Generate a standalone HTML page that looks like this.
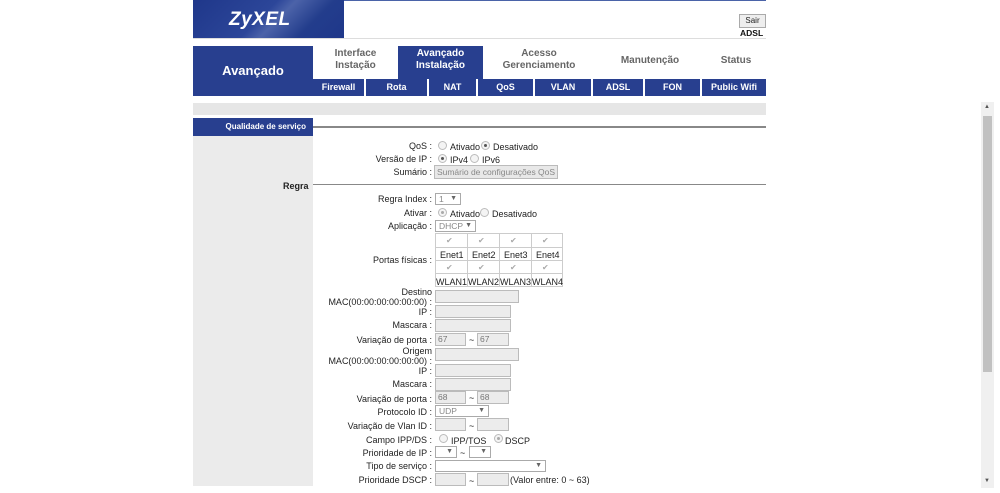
<!DOCTYPE html>
<html><head><meta charset="utf-8"><style>
*{margin:0;padding:0;box-sizing:border-box}
body{width:1000px;height:493px;background:#fff;font-family:"Liberation Sans",Arial,sans-serif;font-size:9px;color:#222;position:relative;overflow:hidden}
.a{position:absolute}
.blue{background:#283f8f;color:#fff}
.lbl{position:absolute;right:568px;text-align:right;white-space:nowrap;font-size:9px;line-height:10px}
.in{position:absolute;background:#ececec;border:1px solid #bbb;height:13px;font-size:8.5px;color:#777;padding-left:2px;line-height:11px}
.sel{position:absolute;background:#fff;border:1px solid #aaa;height:12px;font-size:8.5px;color:#888;padding-left:3px;line-height:10px}
.sel b{position:absolute;right:3px;top:0;font-weight:normal;font-size:7px;color:#666}
.r{position:absolute;width:9px;height:9px;border-radius:50%;border:1px solid #bbb;background:#f4f4f4}
.r.on::after{content:"";position:absolute;left:2px;top:2px;width:3px;height:3px;border-radius:50%;background:#555}
.r.dis.on::after{background:#aaa}
.t{position:absolute;font-size:9px;white-space:nowrap}
.sub{position:absolute;top:79px;height:17px;color:#fff;font-weight:bold;font-size:9px;text-align:center;line-height:17px;background:#283f8f}
.tab{position:absolute;top:48px;font-size:10px;color:#666;text-align:center;line-height:12px;font-weight:bold}
</style></head><body>
<!-- header -->
<div class="a" style="left:193px;top:0;width:573px;height:1px;background:#4a63a8"></div>
<div class="a blue" style="left:193px;top:0;width:151px;height:38px;background:linear-gradient(135deg,#1f378a 0%,#2c4699 45%,#4c63a9 55%,#233d8c 75%,#1f378a 100%)"></div>
<div class="t" style="left:229px;top:9px;font-size:19px;font-weight:bold;font-style:italic;color:#fff;letter-spacing:0.5px">ZyXEL</div>
<div class="a" style="left:193px;top:38px;width:573px;height:1px;background:#ddd"></div>
<div class="a" style="left:739px;top:14px;width:27px;height:14px;background:#eee;border:1px solid #aaa;font-size:8px;text-align:center;line-height:12px">Sair</div>
<div class="t" style="left:740px;top:28px;font-size:8.5px;font-weight:bold;color:#111">ADSL</div>
<!-- nav -->
<div class="a blue" style="left:193px;top:46px;width:120px;height:50px;font-size:13px;font-weight:bold;text-align:center;line-height:50px">Avançado</div>
<div class="tab" style="left:313px;width:85px">Interface<br>Instação</div>
<div class="a blue" style="left:398px;top:46px;width:85px;height:33px"></div>
<div class="tab" style="left:398px;width:85px;color:#fff">Avançado<br>Instalação</div>
<div class="tab" style="left:483px;width:112px">Acesso<br>Gerenciamento</div>
<div class="tab" style="left:600px;width:100px;top:55px">Manutenção</div>
<div class="tab" style="left:706px;width:60px;top:55px">Status</div>
<div class="sub" style="left:313px;width:51px">Firewall</div>
<div class="sub" style="left:366px;width:61px">Rota</div>
<div class="sub" style="left:429px;width:47px">NAT</div>
<div class="sub" style="left:478px;width:55px">QoS</div>
<div class="sub" style="left:535px;width:56px">VLAN</div>
<div class="sub" style="left:593px;width:50px">ADSL</div>
<div class="sub" style="left:645px;width:55px">FON</div>
<div class="sub" style="left:702px;width:64px">Public Wifi</div>
<div class="a" style="left:193px;top:103px;width:573px;height:12px;background:#e6e6e6"></div>
<!-- left col -->
<div class="a blue" style="left:193px;top:118px;width:120px;height:18px;font-size:8px;font-weight:bold;text-align:right;padding-right:7px;line-height:18px">Qualidade de serviço</div>
<div class="a" style="left:193px;top:136px;width:120px;height:350px;background:#ebebeb"></div>
<div class="a" style="left:313px;top:126px;width:453px;height:2px;background:#888"></div>
<div class="t" style="left:283px;top:181px;font-weight:bold;font-size:9px">Regra</div>
<div class="a" style="left:313px;top:184px;width:453px;height:1px;background:#888"></div>

<div class="lbl" style="top:141px">QoS :</div>
<div class="r" style="left:438px;top:141px"></div><div class="t" style="left:450px;top:142px">Ativado</div>
<div class="r on" style="left:481px;top:141px"></div><div class="t" style="left:493px;top:142px">Desativado</div>
<div class="lbl" style="top:154px">Versão de IP :</div>
<div class="r on" style="left:438px;top:154px"></div><div class="t" style="left:450px;top:155px">IPv4</div>
<div class="r" style="left:470px;top:154px"></div><div class="t" style="left:482px;top:155px">IPv6</div>
<div class="lbl" style="top:167px">Sumário :</div>
<div class="a" style="left:434px;top:165px;width:124px;height:14px;background:#e8e8e8;border:1px solid #bbb;font-size:8.5px;color:#888;text-align:center;line-height:12px">Sumário de configurações QoS</div>

<div class="lbl" style="top:194px">Regra Index :</div>
<div class="sel" style="left:435px;top:193px;width:26px">1<b>▼</b></div>
<div class="lbl" style="top:208px">Ativar :</div>
<div class="r dis on" style="left:438px;top:208px"></div><div class="t" style="left:450px;top:209px">Ativado</div>
<div class="r" style="left:480px;top:208px"></div><div class="t" style="left:492px;top:209px">Desativado</div>
<div class="lbl" style="top:221px">Aplicação :</div>
<div class="sel" style="left:435px;top:220px;width:41px">DHCP<b>▼</b></div>
<div class="lbl" style="top:255px">Portas físicas :</div>
<div class="a" style="left:435px;top:233px;width:128px;height:54px;border:1px solid #ccc;background:#fff"></div>
<div class="a" style="left:467px;top:233px;width:1px;height:54px;background:#ccc"></div>
<div class="a" style="left:499px;top:233px;width:1px;height:54px;background:#ccc"></div>
<div class="a" style="left:531px;top:233px;width:1px;height:54px;background:#ccc"></div>
<div class="a" style="left:435px;top:247px;width:128px;height:1px;background:#ccc"></div>
<div class="a" style="left:435px;top:260px;width:128px;height:1px;background:#ccc"></div>
<div class="a" style="left:435px;top:273px;width:128px;height:1px;background:#ccc"></div>
<div class="t" style="left:446px;top:236px;color:#aaa;font-size:8px">✔</div><div class="t" style="left:478px;top:236px;color:#aaa;font-size:8px">✔</div><div class="t" style="left:510px;top:236px;color:#aaa;font-size:8px">✔</div><div class="t" style="left:542px;top:236px;color:#aaa;font-size:8px">✔</div>
<div class="t" style="left:440px;top:250px">Enet1</div><div class="t" style="left:472px;top:250px">Enet2</div><div class="t" style="left:504px;top:250px">Enet3</div><div class="t" style="left:536px;top:250px">Enet4</div>
<div class="t" style="left:446px;top:263px;color:#aaa;font-size:8px">✔</div><div class="t" style="left:478px;top:263px;color:#aaa;font-size:8px">✔</div><div class="t" style="left:510px;top:263px;color:#aaa;font-size:8px">✔</div><div class="t" style="left:542px;top:263px;color:#aaa;font-size:8px">✔</div>
<div class="t" style="left:436px;top:277px">WLAN1</div><div class="t" style="left:468px;top:277px">WLAN2</div><div class="t" style="left:500px;top:277px">WLAN3</div><div class="t" style="left:532px;top:277px">WLAN4</div>

<div class="lbl" style="top:287px">Destino<br>MAC(00:00:00:00:00:00) :</div>
<div class="in" style="left:435px;top:290px;width:84px"></div>
<div class="lbl" style="top:307px">IP :</div><div class="in" style="left:435px;top:305px;width:76px"></div>
<div class="lbl" style="top:320px">Mascara :</div><div class="in" style="left:435px;top:319px;width:76px"></div>
<div class="lbl" style="top:335px">Variação de porta :</div>
<div class="in" style="left:435px;top:333px;width:31px">67</div><div class="t" style="left:469px;top:335px">~</div><div class="in" style="left:477px;top:333px;width:32px">67</div>
<div class="lbl" style="top:346px">Origem<br>MAC(00:00:00:00:00:00) :</div>
<div class="in" style="left:435px;top:348px;width:84px"></div>
<div class="lbl" style="top:366px">IP :</div><div class="in" style="left:435px;top:364px;width:76px"></div>
<div class="lbl" style="top:379px">Mascara :</div><div class="in" style="left:435px;top:378px;width:76px"></div>
<div class="lbl" style="top:394px">Variação de porta :</div>
<div class="in" style="left:435px;top:391px;width:31px">68</div><div class="t" style="left:469px;top:393px">~</div><div class="in" style="left:477px;top:391px;width:32px">68</div>
<div class="lbl" style="top:407px">Protocolo ID :</div>
<div class="sel" style="left:435px;top:405px;width:54px">UDP<b>▼</b></div>
<div class="lbl" style="top:421px">Variação de Vlan ID :</div>
<div class="in" style="left:435px;top:418px;width:31px"></div><div class="t" style="left:469px;top:421px">~</div><div class="in" style="left:477px;top:418px;width:32px"></div>
<div class="lbl" style="top:435px">Campo IPP/DS :</div>
<div class="r" style="left:439px;top:434px"></div><div class="t" style="left:451px;top:436px">IPP/TOS</div>
<div class="r dis on" style="left:494px;top:434px"></div><div class="t" style="left:505px;top:436px">DSCP</div>
<div class="lbl" style="top:448px">Prioridade de IP :</div>
<div class="sel" style="left:435px;top:446px;width:22px"><b>▼</b></div><div class="t" style="left:460px;top:448px">~</div>
<div class="sel" style="left:469px;top:446px;width:22px"><b>▼</b></div>
<div class="lbl" style="top:461px">Tipo de serviço :</div>
<div class="sel" style="left:435px;top:460px;width:111px"><b>▼</b></div>
<div class="lbl" style="top:475px">Prioridade DSCP :</div>
<div class="in" style="left:435px;top:473px;width:31px"></div><div class="t" style="left:469px;top:476px">~</div><div class="in" style="left:477px;top:473px;width:32px"></div>
<div class="t" style="left:510px;top:475px">(Valor entre: 0 ~ 63)</div>
<!-- scrollbar -->
<div class="a" style="left:981px;top:102px;width:13px;height:386px;background:#f0f0f0"></div>
<div class="a" style="left:983px;top:116px;width:9px;height:256px;background:#c1c1c1"></div>
<div class="t" style="left:984px;top:104px;font-size:6px;color:#555">▲</div>
<div class="t" style="left:984px;top:478px;font-size:6px;color:#555">▼</div>
</body></html>
